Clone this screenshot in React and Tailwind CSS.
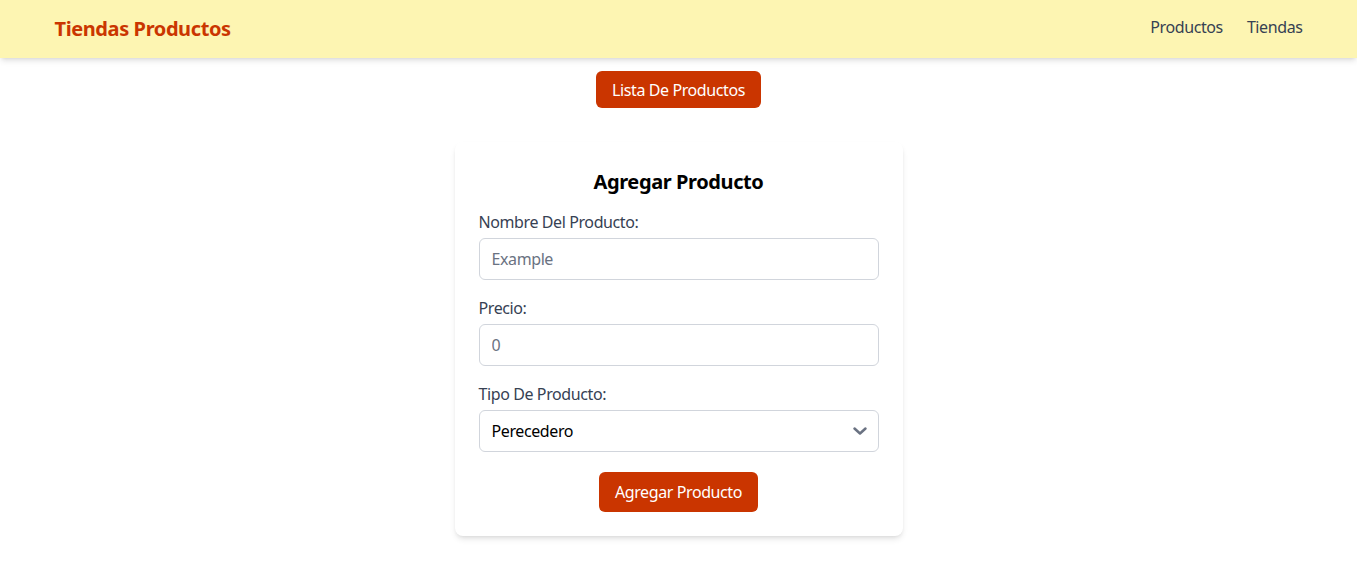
import React from "react";

export default function App() {
  return (
    <div className="min-h-screen bg-white tracking-[-0.025em]" style={{ fontFamily: '"Noto Sans", "Open Sans", sans-serif' }}>
      <header className="bg-[#fdf5b2] shadow-md">
        <div className="max-w-7xl mx-auto px-4 h-[58px] flex items-center justify-between">
          <span className="text-xl font-bold text-orange-700">Tiendas Productos</span>
          <nav className="flex gap-6 text-base text-gray-700 -mt-[4px]">
            <a href="#">Productos</a>
            <a href="#">Tiendas</a>
          </nav>
        </div>
      </header>
      <main className="flex flex-col items-center">
        <button className="mt-[13px] h-[37px] bg-orange-700 text-white px-4 rounded-md text-base">
          Lista De Productos
        </button>
        <div className="mt-[34px] w-[448px] bg-white rounded-lg shadow-md p-6">
          <h2 className="text-xl font-bold text-center text-black mt-[2px] mb-[14px]">Agregar Producto</h2>
          <div className="mb-4">
            <label className="block text-gray-700 mb-1">Nombre Del Producto:</label>
            <input
              className="w-full border border-gray-300 rounded-md px-3 py-2 placeholder-gray-500 outline-none"
              placeholder="Example"
            />
          </div>
          <div className="mb-4">
            <label className="block text-gray-700 mb-1">Precio:</label>
            <input
              className="w-full border border-gray-300 rounded-md px-3 py-2 placeholder-gray-500 outline-none"
              placeholder="0"
            />
          </div>
          <div className="mb-5">
            <label className="block text-gray-700 mb-1">Tipo De Producto:</label>
            <div className="relative">
              <select className="w-full appearance-none border border-gray-300 rounded-md px-3 py-2 bg-white text-black outline-none">
                <option>Perecedero</option>
                <option>No Perecedero</option>
              </select>
              <svg
                className="absolute right-[9px] top-1/2 -translate-y-1/2 w-5 h-5 text-gray-500 pointer-events-none"
                viewBox="0 0 20 20"
                fill="none"
                stroke="currentColor"
                strokeWidth="2.5"
                strokeLinecap="round"
                strokeLinejoin="round"
              >
                <path d="M4.5 7.5l5.5 5 5.5-5" />
              </svg>
            </div>
          </div>
          <div className="flex justify-center">
            <button className="bg-orange-700 text-white px-4 py-2 rounded-md text-base">Agregar Producto</button>
          </div>
        </div>
      </main>
    </div>
  );
}
